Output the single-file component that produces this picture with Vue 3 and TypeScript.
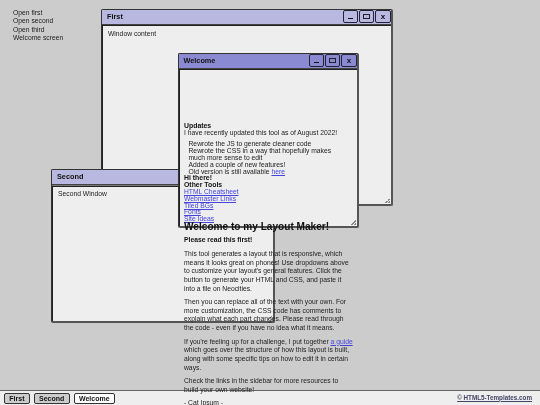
<script setup lang="ts">
interface Win { id: string; title: string; text: string; cls: string }
const menu: string[] = ['Open first', 'Open second', 'Open third', 'Welcome screen']
const wins: Win[] = [
  { id: 'first', title: 'First', text: 'Window content', cls: 'w-first' },
  { id: 'second', title: 'Second', text: 'Second Window', cls: 'w-second' },
]
const tools: string[] = ['HTML Cheatsheet', 'Webmaster Links', 'Tiled BGs', 'Fonts', 'Site Ideas']
</script>

<template>
  <div class="desktop">
    <ul class="menu">
      <li v-for="m in menu" :key="m">{{ m }}</li>
    </ul>

    <section v-for="w in wins" :key="w.id" class="win" :class="w.cls">
      <header class="bar">
        <span class="title">{{ w.title }}</span>
        <span class="ctrls">
          <button class="ctrl"><i class="min"></i></button>
          <button class="ctrl"><i class="max"></i></button>
          <button class="ctrl x">x</button>
        </span>
      </header>
      <div class="body plain">
        <p>{{ w.text }}</p>
        <span class="grip"></span>
      </div>
    </section>

    <section class="win w-welcome">
      <header class="bar">
        <span class="title">Welcome</span>
        <span class="ctrls">
          <button class="ctrl"><i class="min"></i></button>
          <button class="ctrl"><i class="max"></i></button>
          <button class="ctrl x">x</button>
        </span>
      </header>
      <div class="body rich">
        <b class="sub">Updates</b>
        <p class="intro">I have recently updated this tool as of August 2022!</p>
        <ul class="updates">
          <li>Rewrote the JS to generate cleaner code</li>
          <li>Rewrote the CSS in a way that hopefully makes much more sense to edit</li>
          <li>Added a couple of new features!</li>
          <li>Old version is still available <a href="#">here</a></li>
        </ul>
        <b class="sub">Hi there!</b>
        <b class="sub">Other Tools</b>
        <a v-for="t in tools" :key="t" class="tool" href="#">{{ t }}</a>
        <span class="grip"></span>
        <div class="overflow">
          <h1>Welcome to my Layout Maker!</h1>
          <p class="strong">Please read this first!</p>
          <p>This tool generates a layout that is responsive, which means it looks great on phones! Use dropdowns above to customize your layout's general features. Click the button to generate your HTML and CSS, and paste it into a file on Neocities.</p>
          <p>Then you can replace all of the text with your own. For more customization, the CSS code has comments to explain what each part changes. Please read through the code - even if you have no idea what it means.</p>
          <p>If you're feeling up for a challenge, I put together <a href="#">a guide</a> which goes over the structure of how this layout is built, along with some specific tips on how to edit it in certain ways.</p>
          <p>Check the links in the sidebar for more resources to build your own website!</p>
          <p>- Cat Ipsum -</p>
        </div>
      </div>
    </section>

    <footer class="taskbar">
      <button class="task">First</button>
      <button class="task">Second</button>
      <button class="task active">Welcome</button>
      <a class="credit" href="#">© HTML5-Templates.com</a>
    </footer>
  </div>
</template>

<style>
html, body { margin: 0; background: #ccc; overflow: hidden; }
</style>

<style scoped>
.desktop {
  position: relative;
  width: 540px;
  height: 405px;
  overflow: hidden;
  background: #ccc;
  color: #222;
  font-family: "Liberation Sans", Arial, sans-serif;
  font-size: 6.75px;
  line-height: 8.5px;
  filter: blur(0.4px);
}
.menu { position: absolute; left: 13px; top: 8.5px; margin: 0; padding: 0; list-style: none; }
.win {
  position: absolute;
  box-sizing: border-box;
  display: flex;
  flex-direction: column;
  border: 1.35px solid #333;
  border-right: 2.2px solid #555;
  border-bottom: 2.2px solid #555;
  border-radius: 2px;
  background: #777;
}
.w-first { left: 101px; top: 8.5px; width: 292px; height: 197px; z-index: 1; }
.w-second { left: 51px; top: 169px; width: 224px; height: 154px; z-index: 2; }
.w-welcome { left: 177.5px; top: 52.5px; width: 181.5px; height: 175px; z-index: 4; }
.bar {
  display: flex;
  align-items: center;
  justify-content: space-between;
  flex: none;
  height: 14.2px;
  padding: 0 0.5px 0 5px;
  background: #b8b8e0;
  border-bottom: 1.2px solid #444;
  color: #111;
}
.w-welcome .bar { background: #8a8ad2; }
.title { padding-top: 1px; font-size: 7.3px; font-weight: 700; }
.ctrls { display: flex; gap: 1px; }
.ctrl {
  box-sizing: border-box;
  display: flex;
  align-items: center;
  justify-content: center;
  width: 15.3px;
  height: 12.5px;
  padding: 0;
  border: 1.3px solid #223;
  border-radius: 2px;
  background: transparent;
  font: 700 8px/1 "Liberation Sans", sans-serif;
  color: #111;
}
.min { display: block; width: 5px; height: 1.6px; margin-top: 4px; background: #111; }
.max { display: block; width: 6.5px; height: 5.5px; box-sizing: border-box; border: 1.2px solid #222; }
.body {
  position: relative;
  flex: 1;
  min-height: 0;
  background: #eee;
  border-top: 1.2px solid #222;
  border-left: 1.3px solid #222;
  margin-top: 0.4px;
}
.plain { padding: 3.5px 5px; }
.plain p { margin: 0; }
.rich { display: flex; flex-direction: column; align-items: flex-start; padding: 52.5px 4.5px 0; }
.sub { display: block; flex: none; font-weight: 700; color: #111; font-size: 6.9px; line-height: 6.8px; }
.intro { flex: none; margin: 0 0 5px; line-height: 7px; }
.updates { flex: none; margin: 0; padding: 0 0 0 4.5px; list-style: none; width: 150px; line-height: 6.8px; }
.rich a { color: #44d; }
.tool { flex: none; line-height: 6.8px; }
.grip {
  position: absolute;
  right: 1px;
  bottom: 1px;
  width: 5px;
  height: 5px;
  background: linear-gradient(135deg, transparent 50%, #888 50%, #888 65%, transparent 65%, transparent 80%, #888 80%);
}
.overflow { flex: none; width: 170px; margin-top: -2px; }
.overflow h1 { margin: 0 0 4.5px; font-size: 10.1px; line-height: 11px; color: #111; }
.overflow p { margin: 0 0 4.7px; line-height: 8.7px; }
.overflow .strong { font-weight: 700; color: #111; }
.taskbar {
  position: absolute;
  left: 0;
  right: 0;
  bottom: 0;
  box-sizing: border-box;
  height: 15px;
  display: flex;
  align-items: center;
  gap: 4px;
  padding: 0 8px 0 4px;
  background: #eee;
  border-top: 1.4px solid #666;
  z-index: 3;
}
.task {
  box-sizing: border-box;
  height: 11px;
  padding: 0 4.3px;
  border: 1.1px solid #333;
  border-radius: 2px;
  background: #ccc;
  font: 700 7px/1 "Liberation Sans", sans-serif;
  color: #111;
}
.task.active { background: #fff; }
.credit { margin-left: auto; font-weight: 700; font-size: 6.3px; color: #446; }
</style>
